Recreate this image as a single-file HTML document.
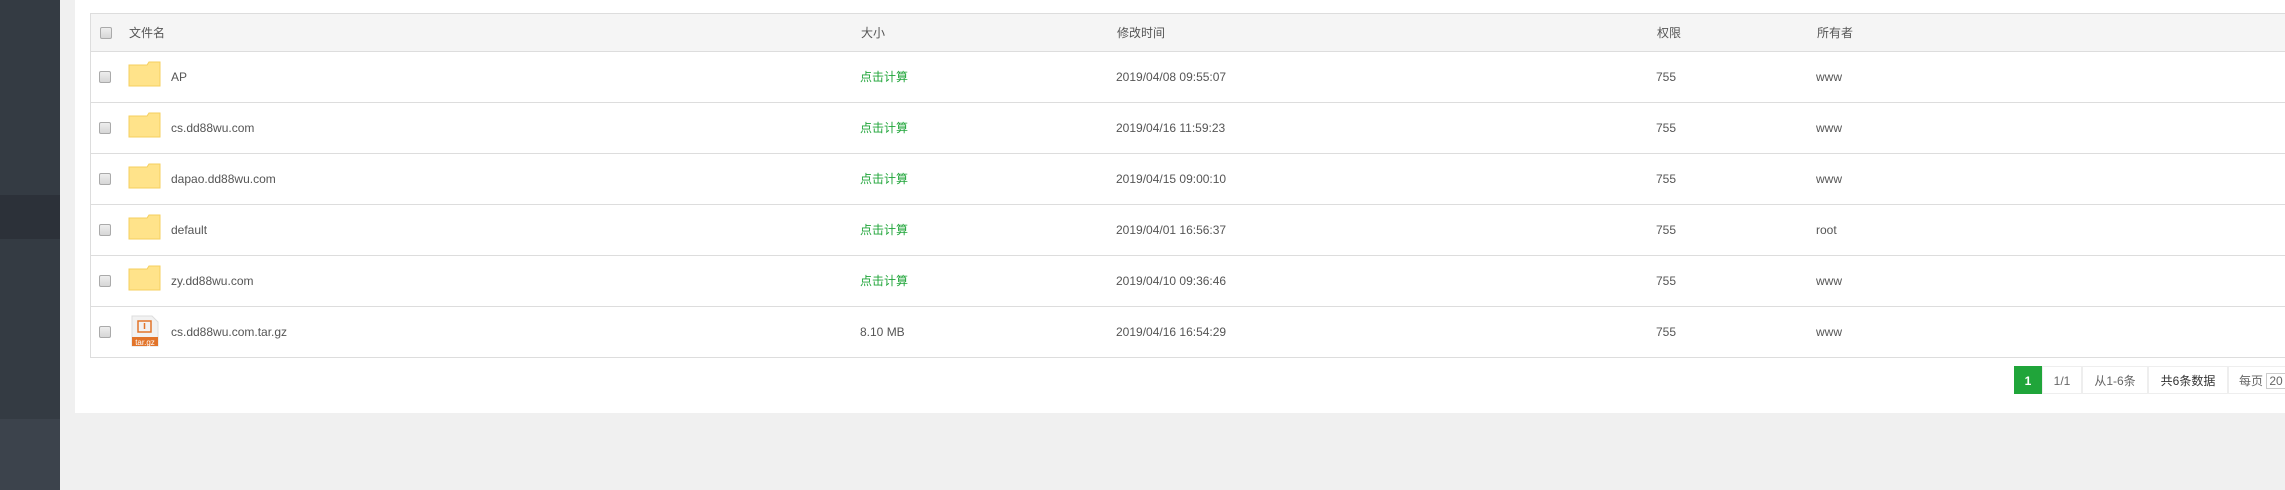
<!DOCTYPE html>
<html><head><meta charset="utf-8"><style>
*{margin:0;padding:0;box-sizing:border-box}
body{width:2285px;height:490px;background:#f0f0f0;position:relative;overflow:hidden;font-family:"Liberation Sans","Noto Sans CJK SC",sans-serif;font-size:12px;color:#555}
.sb{position:absolute;left:0;top:0;width:60px;height:490px;background:#343b43}
.sb .hl{position:absolute;top:195px;left:0;width:60px;height:44px;background:#2c3139}
.sb .bt{position:absolute;top:419px;left:0;width:60px;height:71px;background:#3c434c}
.panel{position:absolute;left:75px;top:0;width:2210px;height:413px;background:#fff}
.tbl{position:absolute;left:90px;top:13px;width:2200px;height:345px;border:1px solid #ddd}
.hd{position:absolute;left:0;top:0;width:100%;height:38px;background:#f5f5f5;border-bottom:1px solid #ddd}
.row{position:absolute;left:0;width:100%;height:51px;border-bottom:1px solid #ddd}
.c{position:absolute;top:0;line-height:inherit;white-space:nowrap}
.cb{position:absolute;left:9px;width:12px;height:12px;border:1px solid #aaa;border-radius:2px;background:linear-gradient(#eee,#d6d6d6)}
.fold{position:absolute;left:38px;top:9px;width:33px;height:26px}
.g{color:#20a53a}
.pg{position:absolute;top:366px;height:28px;line-height:28px;font-size:12px;border:1px solid #eee;text-align:center;background:#fff;color:#666}
</style></head><body>
<div class="sb"><div class="hl"></div><div class="bt"></div></div>
<div class="panel"></div>
<div class="tbl">
 <div class="hd" style="line-height:38px">
  <div class="cb" style="top:13px"></div>
  <div class="c" style="left:38px">文件名</div>
  <div class="c" style="left:770px">大小</div>
  <div class="c" style="left:1026px">修改时间</div>
  <div class="c" style="left:1566px">权限</div>
  <div class="c" style="left:1726px">所有者</div>
 </div>
</div>
<script></script>
<div id="rows"></div>
<div class="tbl" style="border:none;top:52px;height:auto">
 <div class="row" style="top:0;line-height:50px"><div class="cb" style="top:19px"></div><svg class="fold" viewBox="0 0 33 26"><path d="M1 4h18l2-3h11v24H1z" fill="#ffe38a" stroke="#f5cf5f"/></svg><div class="c" style="left:81px">AP</div><div class="c g" style="left:770px">点击计算</div><div class="c" style="left:1026px">2019/04/08 09:55:07</div><div class="c" style="left:1566px">755</div><div class="c" style="left:1726px">www</div></div>
 <div class="row" style="top:51px;line-height:50px"><div class="cb" style="top:19px"></div><svg class="fold" viewBox="0 0 33 26"><path d="M1 4h18l2-3h11v24H1z" fill="#ffe38a" stroke="#f5cf5f"/></svg><div class="c" style="left:81px">cs.dd88wu.com</div><div class="c g" style="left:770px">点击计算</div><div class="c" style="left:1026px">2019/04/16 11:59:23</div><div class="c" style="left:1566px">755</div><div class="c" style="left:1726px">www</div></div>
 <div class="row" style="top:102px;line-height:50px"><div class="cb" style="top:19px"></div><svg class="fold" viewBox="0 0 33 26"><path d="M1 4h18l2-3h11v24H1z" fill="#ffe38a" stroke="#f5cf5f"/></svg><div class="c" style="left:81px">dapao.dd88wu.com</div><div class="c g" style="left:770px">点击计算</div><div class="c" style="left:1026px">2019/04/15 09:00:10</div><div class="c" style="left:1566px">755</div><div class="c" style="left:1726px">www</div></div>
 <div class="row" style="top:153px;line-height:50px"><div class="cb" style="top:19px"></div><svg class="fold" viewBox="0 0 33 26"><path d="M1 4h18l2-3h11v24H1z" fill="#ffe38a" stroke="#f5cf5f"/></svg><div class="c" style="left:81px">default</div><div class="c g" style="left:770px">点击计算</div><div class="c" style="left:1026px">2019/04/01 16:56:37</div><div class="c" style="left:1566px">755</div><div class="c" style="left:1726px">root</div></div>
 <div class="row" style="top:204px;line-height:50px"><div class="cb" style="top:19px"></div><svg class="fold" viewBox="0 0 33 26"><path d="M1 4h18l2-3h11v24H1z" fill="#ffe38a" stroke="#f5cf5f"/></svg><div class="c" style="left:81px">zy.dd88wu.com</div><div class="c g" style="left:770px">点击计算</div><div class="c" style="left:1026px">2019/04/10 09:36:46</div><div class="c" style="left:1566px">755</div><div class="c" style="left:1726px">www</div></div>
 <div class="row" style="top:255px;line-height:50px"><div class="cb" style="top:19px"></div>
  <svg style="position:absolute;left:41px;top:8px" width="28" height="32" viewBox="0 0 28 32"><path d="M1 1h20l6 6v24H1z" fill="#f2f2f2" stroke="#ddd"/><rect x="1" y="22" width="26" height="9" fill="#e2742a"/><text x="14" y="30" font-size="8" fill="#fff" text-anchor="middle" font-family="Liberation Sans">tar.gz</text><rect x="7" y="6" width="13" height="11" fill="none" stroke="#e2742a" stroke-width="1.5"/><path d="M13.5 8v6" stroke="#e2742a" stroke-width="1.5"/></svg>
  <div class="c" style="left:81px">cs.dd88wu.com.tar.gz</div><div class="c" style="left:770px">8.10 MB</div><div class="c" style="left:1026px">2019/04/16 16:54:29</div><div class="c" style="left:1566px">755</div><div class="c" style="left:1726px">www</div></div>
</div>
<div class="pg" style="left:2014px;width:28px;background:#20a53a;border-color:#20a53a;color:#fff;font-weight:bold">1</div>
<div class="pg" style="left:2042px;width:40px">1/1</div>
<div class="pg" style="left:2082px;width:66px">从1-6条</div>
<div class="pg" style="left:2148px;width:80px;color:#333">共6条数据</div>
<div class="pg" style="left:2228px;width:60px;text-align:left;padding-left:10px">每页 <span style="border:1px solid #ccc;padding:0 2px">20</span></div>
</body></html>
